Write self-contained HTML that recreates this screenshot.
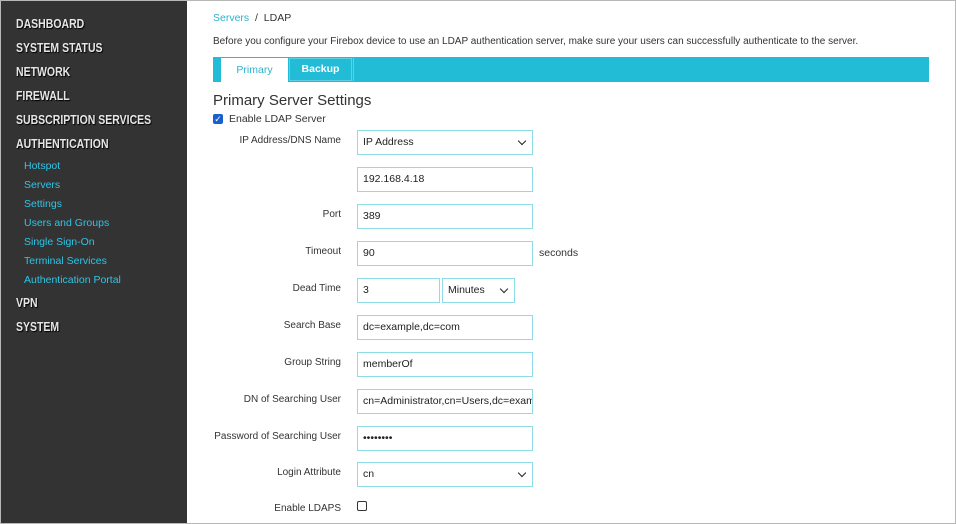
<!DOCTYPE html>
<html><head><style>
*{box-sizing:border-box;margin:0;padding:0}
body{width:956px;height:524px;overflow:hidden;background:#fff;font-family:"Liberation Sans",sans-serif;position:relative}
#frame{position:absolute;left:0;top:0;width:956px;height:524px;border:1px solid #b8b8b8;pointer-events:none}
#side{position:absolute;left:0;top:0;width:187px;height:524px;background:#333}
.m{position:absolute;left:16px;color:#e6e6e6;font-weight:bold;font-size:12.5px;text-shadow:1px 1px 1px #000;transform:scaleX(0.84);transform-origin:0 0;white-space:nowrap}
.s{position:absolute;left:24px;color:#2ec5e6;font-size:10.5px}
.t{position:absolute;font-size:11px;color:#333}
.lab{position:absolute;right:615px;font-size:10px;color:#333;text-align:right;white-space:nowrap}
.in{position:absolute;left:357px;width:176px;height:25px;border:1px solid #8fdce9;font-size:10.5px;color:#222;padding:5px 5px;background:#fff}
.dd::after{content:"";position:absolute;right:7px;top:7px;width:5px;height:5px;border-right:1.5px solid #222;border-bottom:1.5px solid #222;transform:rotate(45deg)}
</style></head><body>
<div id="side">
<div class="m" style="top:17px">DASHBOARD</div>
<div class="m" style="top:41px">SYSTEM STATUS</div>
<div class="m" style="top:65px">NETWORK</div>
<div class="m" style="top:89px">FIREWALL</div>
<div class="m" style="top:113px">SUBSCRIPTION SERVICES</div>
<div class="m" style="top:137px">AUTHENTICATION</div>
<div class="s" style="top:160px">Hotspot</div>
<div class="s" style="top:179px">Servers</div>
<div class="s" style="top:198px">Settings</div>
<div class="s" style="top:217px">Users and Groups</div>
<div class="s" style="top:236px">Single Sign-On</div>
<div class="s" style="top:255px">Terminal Services</div>
<div class="s" style="top:274px">Authentication Portal</div>
<div class="m" style="top:296px">VPN</div>
<div class="m" style="top:320px">SYSTEM</div>
</div>
<div class="t" style="left:213px;top:12px;font-size:10.5px"><span style="color:#2ab3cf">Servers</span> &nbsp;/&nbsp; LDAP</div>
<div class="t" style="left:213px;top:36px;font-size:10px">Before you configure your Firebox device to use an LDAP authentication server, make sure your users can successfully authenticate to the server.</div>
<div style="position:absolute;left:213px;top:57px;width:716px;height:25px;background:#22bcd6"></div>
<div style="position:absolute;left:221px;top:58px;width:67px;height:24px;background:#fff;color:#2ab3cf;font-size:10.5px;text-align:center;line-height:24px">Primary</div>
<div style="position:absolute;left:289px;top:58px;width:63px;height:23px;border:1px solid #5fd0e3;color:#fff;font-weight:bold;font-size:10.5px;text-align:center;line-height:21px">Backup</div>
<div style="position:absolute;left:353px;top:58px;width:1px;height:23px;background:#5fd0e3"></div>
<div class="t" style="left:213px;top:92px;font-size:15px">Primary Server Settings</div>
<div style="position:absolute;left:213px;top:114px;width:10px;height:10px;background:#1a5fd0;border-radius:2px;color:#fff;font-size:9px;line-height:10px;text-align:center">✓</div>
<div class="t" style="left:229px;top:113px;font-size:10.5px">Enable LDAP Server</div>
<div class="lab" style="top:135px">IP Address/DNS Name</div>
<div class="in dd" style="top:130px">IP Address</div>
<div class="in" style="top:167px">192.168.4.18</div>
<div class="lab" style="top:209px">Port</div>
<div class="in" style="top:204px">389</div>
<div class="lab" style="top:246px">Timeout</div>
<div class="in" style="top:241px">90</div>
<div class="t" style="left:539px;top:247px;font-size:10.5px">seconds</div>
<div class="lab" style="top:283px">Dead Time</div>
<div class="in" style="top:278px;width:83px">3</div>
<div class="in dd" style="top:278px;left:442px;width:73px">Minutes</div>
<div class="lab" style="top:320px">Search Base</div>
<div class="in" style="top:315px">dc=example,dc=com</div>
<div class="lab" style="top:357px">Group String</div>
<div class="in" style="top:352px">memberOf</div>
<div class="lab" style="top:394px">DN of Searching User</div>
<div class="in" style="top:389px;white-space:nowrap;overflow:hidden">cn=Administrator,cn=Users,dc=example</div>
<div class="lab" style="top:431px">Password of Searching User</div>
<div class="in" style="top:426px">••••••••</div>
<div class="lab" style="top:467px">Login Attribute</div>
<div class="in dd" style="top:462px">cn</div>
<div class="lab" style="top:503px">Enable LDAPS</div>
<div style="position:absolute;left:357px;top:501px;width:10px;height:10px;border:1px solid #333;border-radius:2px"></div>
<div id="frame"></div>
</body></html>
